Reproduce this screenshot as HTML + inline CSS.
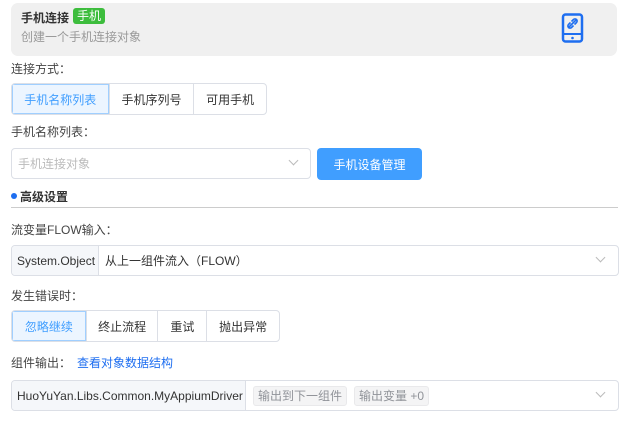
<!DOCTYPE html>
<html><head><meta charset="utf-8"><style>
*{box-sizing:border-box;margin:0;padding:0}
body{width:630px;height:423px;background:#fff;font-family:"Liberation Sans","Noto Sans CJK SC",sans-serif;font-size:12px;color:#333;position:relative;overflow:hidden}
.a{position:absolute}
.hdr{left:11px;top:3px;width:606px;height:53px;background:#f0f0f0;border-radius:7px}
.lbl{font-size:12px;color:#444;left:11px}
.grp{display:flex;border:1px solid #dcdfe6;border-radius:4px;overflow:hidden;height:32px}
.grp div{display:flex;align-items:center;justify-content:center;border-left:1px solid #dcdfe6;font-size:12px;color:#333}
.grp div:first-child{border-left:none}
.grp .on{background:#ecf5ff;color:#409eff;box-shadow:inset 0 0 0 1px #a0cfff}
.inp{border:1px solid #dcdfe6;border-radius:4px;display:flex;align-items:center;height:31px;overflow:hidden}
.pre{background:#f5f7fa;border-right:1px solid #dcdfe6;height:100%;display:flex;align-items:center;padding:0 5px;color:#333}
.chev{position:absolute;width:7px;height:7px;border-right:1px solid #bbb;border-bottom:1px solid #bbb;transform:rotate(45deg)}
.tag{background:#f4f4f5;border:1px solid #e9e9eb;color:#909399;border-radius:3px;height:20px;display:flex;align-items:center;padding:0 4px;margin-left:7px;font-size:12px}
</style></head><body>
<div class="a hdr"></div>
<div class="a" style="left:21px;top:9px;font-weight:bold;font-size:12px;color:#333">手机连接</div>
<div class="a" style="left:73px;top:8px;width:32px;height:16px;background:#3dbd3d;border-radius:3px;color:#fff;font-size:12px;line-height:16px;text-align:center">手机</div>
<div class="a" style="left:21px;top:28px;color:#999;font-size:12px">创建一个手机连接对象</div>
<svg class="a" style="left:561px;top:13px" width="26" height="30" viewBox="0 0 26 30"><rect x="2" y="1.5" width="19" height="27" rx="2.5" fill="none" stroke="#1e6ef0" stroke-width="2.5"/><line x1="2" y1="21" x2="21" y2="21" stroke="#1e6ef0" stroke-width="2"/><circle cx="11.5" cy="25" r="1.3" fill="#1e6ef0"/><path d="M8 14l7-7M9.5 9.5l-2 2a2 2 0 0 0 3 3l2-2M13.5 11.5l2-2a2 2 0 0 0-3-3l-2 2" stroke="#1e6ef0" stroke-width="1.6" fill="none"/></svg>
<div class="a lbl" style="top:60px">连接方式：</div>
<div class="a grp" style="left:11px;top:83px;width:256px"><div class="on" style="width:97px">手机名称列表</div><div style="width:85px">手机序列号</div><div style="width:73px">可用手机</div></div>
<div class="a lbl" style="top:123px">手机名称列表：</div>
<div class="a inp" style="left:11px;top:148px;width:300px;height:31px"><span style="padding-left:6px;color:#bbb">手机连接对象</span></div>
<div class="chev" style="left:290px;top:157px"></div>
<div class="a" style="left:317px;top:148px;width:105px;height:32px;background:#409eff;border-radius:4px;color:#fff;display:flex;align-items:center;justify-content:center">手机设备管理</div>
<div class="a" style="left:11px;top:193px;width:6px;height:6px;border-radius:50%;background:#1e6ef0"></div>
<div class="a" style="left:20px;top:188px;font-weight:bold;color:#333">高级设置</div>
<div class="a" style="left:11px;top:207px;width:607px;height:1px;background:#ccc"></div>
<div class="a lbl" style="top:221px">流变量FLOW输入：</div>
<div class="a inp" style="left:11px;top:245px;width:608px"><div class="pre" style="width:87px">System.Object</div><span style="padding-left:6px">从上一组件流入（FLOW）</span></div>
<div class="chev" style="left:597px;top:254px"></div>
<div class="a lbl" style="top:287px">发生错误时：</div>
<div class="a grp" style="left:11px;top:310px;width:269px"><div class="on" style="width:74px">忽略继续</div><div style="width:72px">终止流程</div><div style="width:49px">重试</div><div style="width:73px">抛出异常</div></div>
<div class="a lbl" style="top:354px">组件输出：<span style="color:#1e6ef0;margin-left:6px">查看对象数据结构</span></div>
<div class="a inp" style="left:11px;top:380px;width:608px"><div class="pre" style="width:234px">HuoYuYan.Libs.Common.MyAppiumDriver</div><div class="tag">输出到下一组件</div><div class="tag">输出变量 +0</div></div>
<div class="chev" style="left:597px;top:389px"></div>
</body></html>
